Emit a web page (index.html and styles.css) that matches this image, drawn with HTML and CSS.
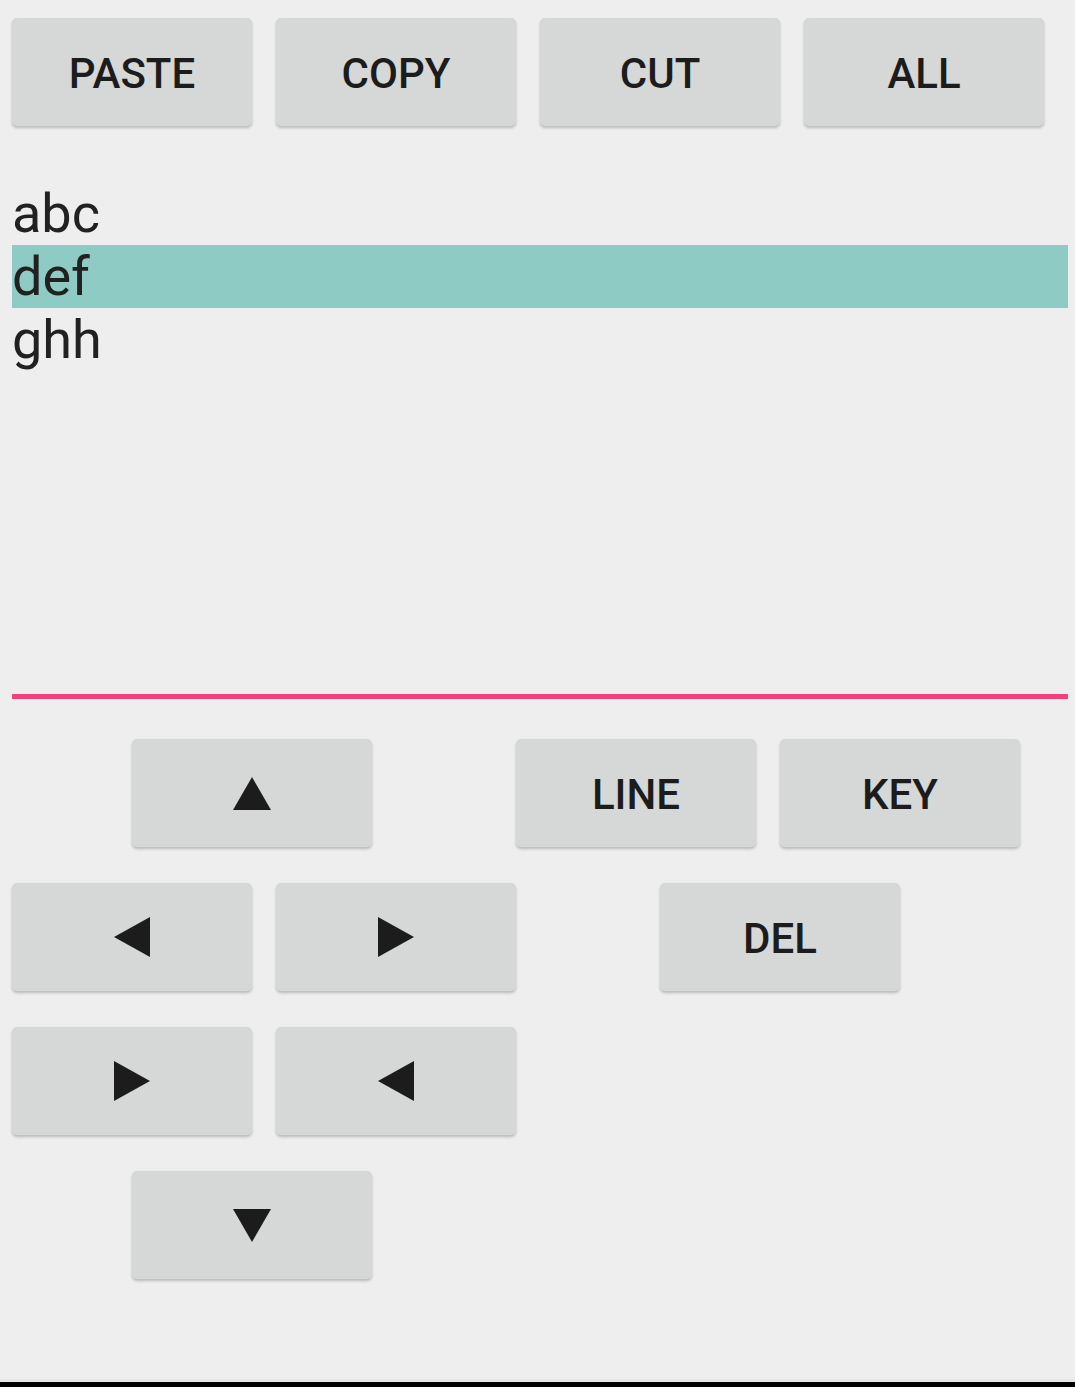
FILE: index.html
```html
<!DOCTYPE html>
<html>
<head>
<meta charset="utf-8">
<link rel="stylesheet" href="styles.css">
</head>
<body>
<div class="app">
  <div class="toolbar">
    <div class="btn text">PASTE</div>
    <div class="btn text">COPY</div>
    <div class="btn text">CUT</div>
    <div class="btn text">ALL</div>
  </div>
  <div class="editor">
    <div class="line">abc</div>
    <div class="line selected">def</div>
    <div class="line">ghh</div>
  </div>
  <div class="keypad">
    <div class="row">
      <div class="btn indent"><svg width="38" height="33" viewBox="0 0 38 33"><polygon points="19,0 38,33 0,33" fill="#1c1c1c"/></svg></div>
      <div class="btn text wide-gap">LINE</div>
      <div class="btn text">KEY</div>
    </div>
    <div class="row">
      <div class="btn"><svg width="36" height="40" viewBox="0 0 36 40"><polygon points="0,20 36,0 36,40" fill="#1c1c1c"/></svg></div>
      <div class="btn"><svg width="36" height="40" viewBox="0 0 36 40"><polygon points="36,20 0,0 0,40" fill="#1c1c1c"/></svg></div>
      <div class="btn text wide-gap">DEL</div>
    </div>
    <div class="row">
      <div class="btn"><svg width="36" height="40" viewBox="0 0 36 40"><polygon points="36,20 0,0 0,40" fill="#1c1c1c"/></svg></div>
      <div class="btn"><svg width="36" height="40" viewBox="0 0 36 40"><polygon points="0,20 36,0 36,40" fill="#1c1c1c"/></svg></div>
    </div>
    <div class="row">
      <div class="btn indent"><svg width="38" height="33" viewBox="0 0 38 33"><polygon points="0,0 38,0 19,33" fill="#1c1c1c"/></svg></div>
    </div>
  </div>
  <div class="navbar"></div>
</div>
</body>
</html>
```
FILE: styles.css
```css
html, body {
  margin: 0;
  padding: 0;
  background: #eeeeee;
}
.app {
  display: flex;
  flex-direction: column;
  min-height: 1387px;
  font-family: Roboto, "Liberation Sans", sans-serif;
  color: #212121;
}
.toolbar {
  display: flex;
  gap: 24px;
  padding: 18px 12px 0 12px;
}
.btn {
  width: 240px;
  height: 108px;
  flex: 0 0 240px;
  box-sizing: border-box;
  background: #d6d7d7;
  border-radius: 5px;
  box-shadow: 0 2px 3px rgba(0, 0, 0, 0.22);
  display: flex;
  align-items: center;
  justify-content: center;
  font-size: 42px;
  font-weight: 500;
  color: #1c1c1c;
}
.btn.text {
  padding-top: 3px;
}
.editor {
  margin: 56px 7px 0 12px;
  height: 512px;
  border-bottom: 5px solid #f5407e;
}
.line {
  font-size: 54px;
  line-height: 63px;
  height: 63px;
  color: #212121;
}
.line.selected {
  background: #8ecbc4;
}
.keypad {
  display: flex;
  flex-direction: column;
  gap: 36px;
  padding: 40px 12px 0 12px;
}
.row {
  display: flex;
  gap: 24px;
}
.indent {
  margin-left: 120px;
}
.wide-gap {
  margin-left: 120px;
}
.navbar {
  margin-top: auto;
  height: 5px;
  background: #000;
  box-shadow: 0 -3px 0 #e6e6e6;
}
```
